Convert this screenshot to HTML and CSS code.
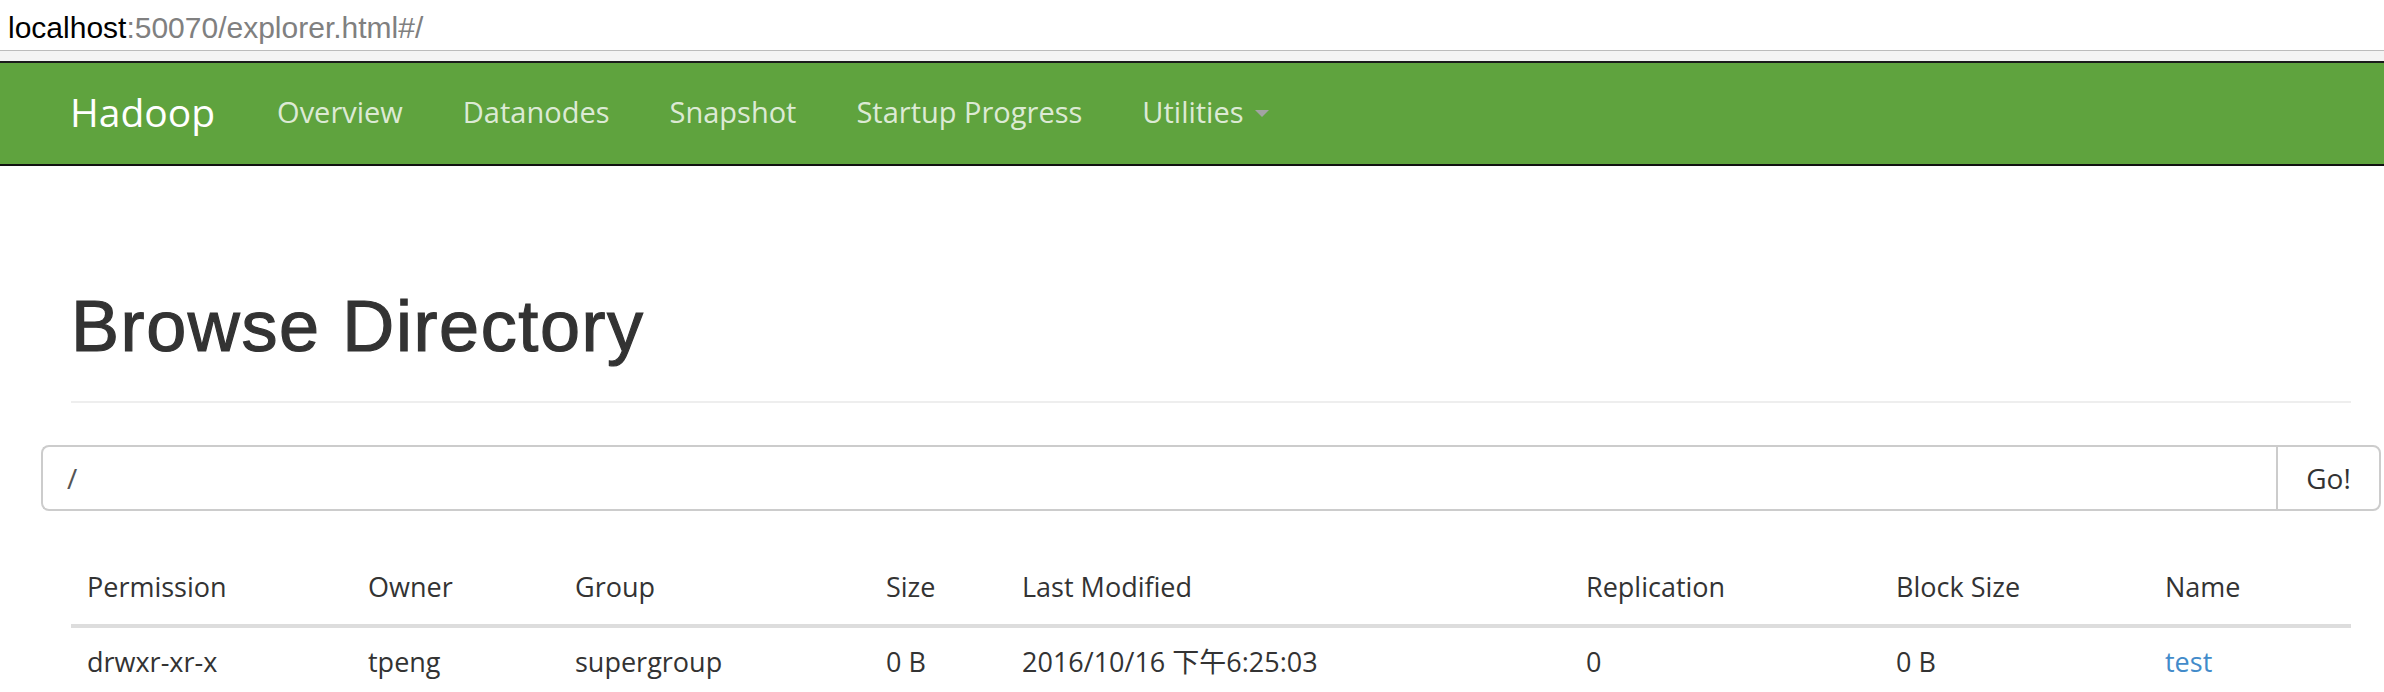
FILE: index.html
```html
<!DOCTYPE html>
<html lang="en">
<head>
<meta charset="utf-8">
<title>Browsing HDFS</title>
<link rel="stylesheet" href="styles.css">
</head>
<body>
<div class="urlbar"><span class="host">localhost</span><span class="path">:50070/explorer.html#/</span></div>
<div class="chrome-band"></div>
<nav class="navbar">
  <a class="brand" href="#">Hadoop</a>
  <ul class="nav">
    <li><a href="#">Overview</a></li>
    <li><a href="#">Datanodes</a></li>
    <li><a href="#">Snapshot</a></li>
    <li><a href="#">Startup Progress</a></li>
    <li><a href="#">Utilities<span class="caret"></span></a></li>
  </ul>
</nav>
<main class="container">
  <div class="page-header"><h1>Browse Directory</h1></div>
  <form class="input-group">
    <input class="form-control" type="text" value="/">
    <button class="btn" type="button">Go!</button>
  </form>
  <table class="listing">
    <colgroup>
      <col class="c1"><col class="c2"><col class="c3"><col class="c4"><col class="c5"><col class="c6"><col class="c7"><col class="c8">
    </colgroup>
    <thead>
      <tr><th>Permission</th><th>Owner</th><th>Group</th><th>Size</th><th>Last Modified</th><th>Replication</th><th>Block Size</th><th>Name</th></tr>
    </thead>
    <tbody>
      <tr><td>drwxr-xr-x</td><td>tpeng</td><td>supergroup</td><td>0 B</td><td>2016/10/16 下午6:25:03</td><td>0</td><td>0 B</td><td><a class="link" href="#">test</a></td></tr>
    </tbody>
  </table>
</main>
</body>
</html>
```

FILE: styles.css
```css
* { box-sizing: border-box; }
html, body { margin: 0; padding: 0; background: #fff; }
body {
  font-family: "Open Sans", "Noto Sans CJK SC", sans-serif;
  color: #333;
  overflow: hidden;
}
.urlbar {
  height: 51px;
  border-bottom: 1px solid #bcbcbc;
  padding: 6px 0 0 8px;
  font-family: "Liberation Sans", Arial, sans-serif;
  font-size: 30px;
  line-height: 44px;
}
.host { color: #000; }
.path { color: #808080; }
.chrome-band { height: 10px; background: #f4f4f4; }
.navbar {
  height: 105px;
  background: #5fa33e;
  border-top: 2px solid #1b1b1b;
  border-bottom: 2px solid #111;
  display: flex;
  align-items: center;
  padding-left: 70px;
  padding-bottom: 5px;
}
.brand {
  color: #fff;
  font-size: 39px;
  text-decoration: none;
  padding-right: 32px;
}
.nav { display: flex; list-style: none; margin: 0; padding: 0; }
.nav a {
  display: flex;
  align-items: center;
  padding: 0 30px;
  font-size: 29px;
  color: rgba(255, 255, 255, 0.8);
  text-decoration: none;
}
.caret {
  width: 0;
  height: 0;
  border-top: 7px solid #a3a3a3;
  border-left: 7px solid transparent;
  border-right: 7px solid transparent;
  margin-left: 11px;
  margin-top: 4px;
}
.container { width: 2340px; margin-left: 41px; }
.page-header {
  margin: 121px 30px 42px;
  padding-bottom: 35px;
  border-bottom: 2px solid #eee;
}
h1 {
  margin: 0;
  font-family: "Liberation Sans", Arial, sans-serif;
  font-size: 72px;
  line-height: 79px;
  font-weight: 400;
  letter-spacing: 1.6px;
  -webkit-text-stroke: 1.2px #333;
  color: #333;
}
.input-group { display: flex; height: 66px; margin: 0; }
.form-control {
  flex: 1;
  min-width: 0;
  border: 2px solid #ccc;
  border-right: 0;
  border-radius: 8px 0 0 8px;
  padding: 0 24px;
  font-family: "Open Sans", sans-serif;
  font-size: 28px;
  color: #555;
  outline: none;
}
.btn {
  width: 105px;
  border: 2px solid #ccc;
  border-radius: 0 8px 8px 0;
  background: #fff;
  font-family: "Open Sans", sans-serif;
  font-size: 28px;
  color: #333;
  padding: 0;
}
.listing {
  width: 2280px;
  margin: 45px 30px 0;
  border-collapse: collapse;
  table-layout: fixed;
  font-size: 27px;
  line-height: 36px;
}
.c1 { width: 281px; } .c2 { width: 207px; } .c3 { width: 311px; } .c4 { width: 136px; }
.c5 { width: 564px; } .c6 { width: 310px; } .c7 { width: 269px; } .c8 { width: 202px; }
.listing th {
  text-align: left;
  font-weight: 400;
  padding: 13px 16px 19px;
  border-bottom: 4px solid #ddd;
  white-space: nowrap;
}
.listing td { padding: 16px; white-space: nowrap; }
.link { color: #428bca; text-decoration: none; }
```
